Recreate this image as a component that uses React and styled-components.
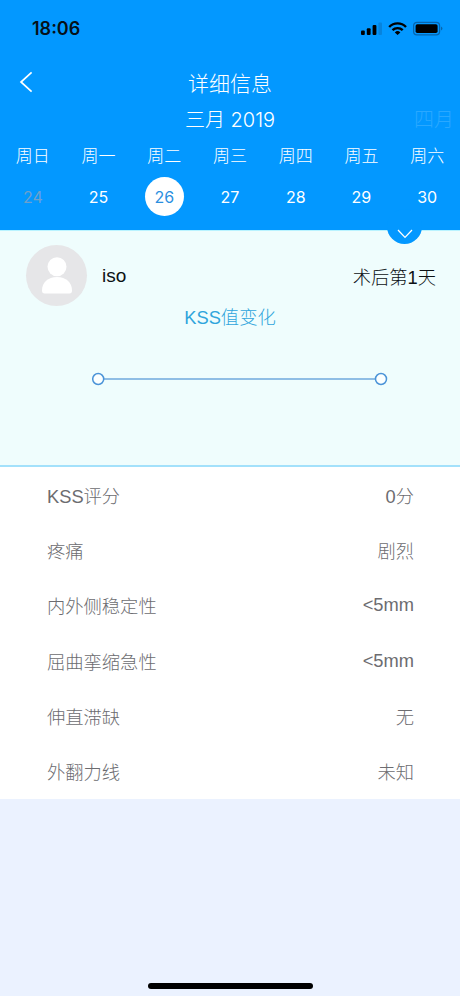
import React from 'react';
import styled, { createGlobalStyle } from 'styled-components';

const weekDays = [
  { label: '周日', date: 24, muted: true },
  { label: '周一', date: 25 },
  { label: '周二', date: 26, selected: true },
  { label: '周三', date: 27 },
  { label: '周四', date: 28 },
  { label: '周五', date: 29 },
  { label: '周六', date: 30 },
];

const details = [
  { label: 'KSS评分', value: '0分' },
  { label: '疼痛', value: '剧烈' },
  { label: '内外侧稳定性', value: '<5mm' },
  { label: '屈曲挛缩急性', value: '<5mm' },
  { label: '伸直滞缺', value: '无' },
  { label: '外翻力线', value: '未知' },
];

const StatusIcons = () => (
  <svg width="84" height="18" viewBox="0 0 84 18">
    <rect x="1" y="10.4" width="3.8" height="4.6" rx="1" fill="#000" />
    <rect x="6.8" y="8.2" width="3.8" height="6.8" rx="1" fill="#000" />
    <rect x="12.6" y="5" width="3.8" height="10" rx="1" fill="#000" />
    <rect x="18.4" y="2.4" width="3.6" height="12.6" rx="1" fill="#0878cb" opacity="0.65" />
    <g fill="none" stroke="#000" strokeWidth="2.4">
      <path d="M29.2 7 A11.6 11.6 0 0 1 46 7" />
      <path d="M32.5 10.2 A7.2 7.2 0 0 1 42.7 10.2" />
    </g>
    <path d="M37.6 15.1 L34.8 12.4 A4.1 4.1 0 0 1 40.4 12.4 Z" fill="#000" />
    <rect x="53.6" y="2.3" width="26" height="12.6" rx="3.4" fill="none" stroke="#0864ab" strokeWidth="1.2" />
    <rect x="55.6" y="4.2" width="22" height="8.8" rx="1.7" fill="#000" />
    <path d="M81 6.6 Q84 8.6 81 10.6 Z" fill="#0864ab" />
  </svg>
);

const App = () => {
  return (
    <>
      <GlobalStyle />
      <Page>
        <Header>
          <StatusBar>
            <Time>18:06</Time>
            <StatusIcons />
          </StatusBar>
          <NavBar>
            <BackButton aria-label="返回">
              <svg width="14" height="22" viewBox="0 0 14 22">
                <path d="M12.6 1.4 L2 11 L12.6 20.6" fill="none" stroke="#fff" strokeWidth="1.7" />
              </svg>
            </BackButton>
            <Title>详细信息</Title>
          </NavBar>
          <MonthRow>
            <Month>三月 2019</Month>
            <NextMonth>四月</NextMonth>
          </MonthRow>
          <Week>
            {weekDays.map((day) => (
              <Day key={day.date}>
                <DayLabel>{day.label}</DayLabel>
                <DayDate $selected={day.selected} $muted={day.muted}>{day.date}</DayDate>
              </Day>
            ))}
          </Week>
          <ExpandButton aria-label="展开">
            <svg width="16" height="10" viewBox="0 0 16 10">
              <path d="M1 1 L8 8.4 L15 1" fill="none" stroke="#fff" strokeWidth="1.3" />
            </svg>
          </ExpandButton>
        </Header>
        <Summary>
          <Patient>
            <Avatar>
              <svg width="30" height="37" viewBox="0 0 30 37">
                <circle cx="15" cy="9.7" r="9.5" fill="#fff" />
                <path d="M0 33.5 C0 25.5 6 20 15 20 C24 20 30 25.5 30 33.5 Q30 36.5 27.5 36.5 H2.5 Q0 36.5 0 33.5 Z" fill="#fff" />
              </svg>
            </Avatar>
            <Name>iso</Name>
            <Stage>术后第1天</Stage>
          </Patient>
          <ChartTitle>KSS值变化</ChartTitle>
          <Chart width="296" height="14" viewBox="0 0 296 14">
            <path d="M12 7 H284" stroke="#6fa9dc" strokeWidth="1.5" />
            <circle cx="6.2" cy="7" r="5.5" />
            <circle cx="289" cy="7" r="5.5" />
          </Chart>
        </Summary>
        <Details>
          {details.map((item) => (
            <Row key={item.label}>
              <span>{item.label}</span>
              <span>{item.value}</span>
            </Row>
          ))}
        </Details>
        <Footer>
          <HomeIndicator />
        </Footer>
      </Page>
    </>
  );
};

const GlobalStyle = createGlobalStyle`
  * {
    box-sizing: border-box;
  }

  body {
    margin: 0;
    font-family: "Liberation Sans", "Noto Sans CJK SC", sans-serif;
  }

  svg {
    display: block;
  }
`;

const Page = styled.div`
  display: flex;
  flex-direction: column;
  width: 460px;
  height: 996px;
  overflow: hidden;
  background: #ebf2ff;
`;

const Header = styled.header`
  position: relative;
  height: 230px;
  background: #0398ff;
  color: #fff;
  font-family: Inter, "Noto Sans CJK SC", sans-serif;
`;

const StatusBar = styled.div`
  display: flex;
  align-items: center;
  justify-content: space-between;
  height: 61px;
  padding: 0 16px 4px 32px;
`;

const Time = styled.span`
  color: #061018;
  font-size: 18px;
  font-weight: 600;
`;

const NavBar = styled.div`
  display: grid;
  grid-template-columns: 60px 1fr 60px;
  align-items: center;
  height: 41px;
`;

const BackButton = styled.button`
  padding: 0 0 0 19px;
  border: none;
  background: none;
`;

const Title = styled.h1`
  margin: 0;
  font-size: 21px;
  font-weight: 300;
  text-align: center;
`;

const MonthRow = styled.div`
  display: grid;
  grid-template-columns: 60px 1fr 60px;
  align-items: center;
  height: 33px;
  font-size: 20px;
  font-weight: 300;
  white-space: nowrap;
`;

const Month = styled.span`
  grid-column: 2;
  text-align: center;
`;

const NextMonth = styled.span`
  padding-left: 14px;
  color: #2aa8ff;
`;

const Week = styled.div`
  display: grid;
  grid-template-columns: repeat(7, 1fr);
`;

const Day = styled.div`
  display: flex;
  flex-direction: column;
  align-items: center;
`;

const DayLabel = styled.span`
  height: 42px;
  font-size: 17px;
  font-weight: 300;
  line-height: 42px;
`;

const DayDate = styled.span`
  display: flex;
  align-items: center;
  justify-content: center;
  width: 39px;
  height: 39px;
  border-radius: 50%;
  background: ${props => (props.$selected ? '#fff' : 'transparent')};
  color: ${props => (props.$selected ? '#2b8fdf' : props.$muted ? '#6ea0cc' : '#fff')};
  font-size: 16px;
`;

const ExpandButton = styled.button`
  position: absolute;
  left: 387px;
  bottom: -14px;
  display: flex;
  align-items: flex-end;
  justify-content: center;
  width: 35px;
  height: 35px;
  padding: 0 0 5px;
  border: none;
  border-radius: 50%;
  background: #0398ff;
`;

const Summary = styled.section`
  display: flex;
  flex-direction: column;
  height: 237px;
  border-top: 1px solid #b9f3ff;
  border-bottom: 2px solid #a3e1fb;
  background: #effdfd;
`;

const Patient = styled.div`
  display: flex;
  align-items: center;
  height: 61px;
  margin-top: 14px;
  padding: 0 24px 0 26px;
  color: #0c1114;
  font-weight: 300;
`;

const Avatar = styled.div`
  display: flex;
  justify-content: center;
  width: 61px;
  height: 61px;
  padding-top: 12px;
  border-radius: 50%;
  background: #e6e6e8;
`;

const Name = styled.span`
  margin-left: 15px;
  font-size: 19px;
`;

const Stage = styled.span`
  margin-left: auto;
  font-size: 18.3px;
`;

const ChartTitle = styled.h2`
  margin: 0;
  color: #2fa5dc;
  font-size: 18.3px;
  font-weight: 300;
  line-height: 24px;
  text-align: center;
`;

const Chart = styled.svg`
  margin: 42px 0 0 92px;

  circle {
    fill: #fbffff;
    stroke: #4b94d8;
    stroke-width: 1.5;
  }
`;

const Details = styled.section`
  display: grid;
  grid-auto-rows: 55.33px;
  background: #fff;
`;

const Row = styled.div`
  display: flex;
  align-items: center;
  justify-content: space-between;
  padding: 0 46px 0 47px;
  color: #6c6c70;
  font-size: 18.3px;
  font-weight: 300;
`;

const Footer = styled.footer`
  display: flex;
  flex: 1;
  align-items: flex-end;
  justify-content: center;
  padding-bottom: 7px;
`;

const HomeIndicator = styled.div`
  width: 165px;
  height: 6px;
  border-radius: 3px;
  background: #000;
`;

export default App;
